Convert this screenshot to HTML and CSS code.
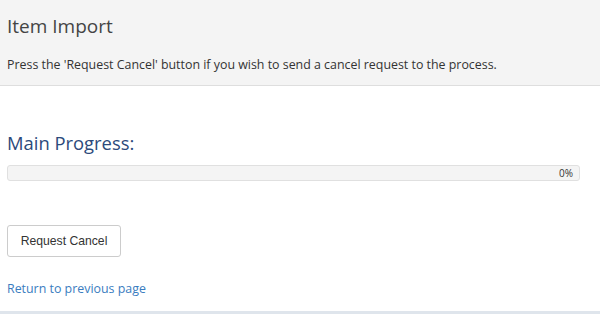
FILE: index.html
```html
<!DOCTYPE html>
<html lang="en">
<head>
  <meta charset="UTF-8" />
  <title>Item Import</title>
  <link rel="stylesheet" href="styles.css">
</head>
<body>
  <div class="page-header">
    <h1>Item Import</h1>
    <p class="page-desc">Press the 'Request Cancel' button if you wish to send a cancel request to the process.</p>
  </div>

  <div class="content">
    <h2 class="progress-title">Main Progress:</h2>
    <div class="progress">
      <div class="progress-bar" style="width: 0%"></div>
      <span class="progress-label">0%</span>
    </div>

    <button class="btn-cancel" type="button">Request Cancel</button>

    <a class="back-link" href="#">Return to previous page</a>
  </div>

  <div class="page-footer"></div>
</body>
</html>
```

FILE: styles.css
```css
* {
  margin: 0;
  padding: 0;
  box-sizing: border-box;
}

body {
  font-family: 'Open Sans', sans-serif;
  background: #fff;
  color: #333;
  width: 600px;
  height: 314px;
  overflow: hidden;
}

.page-header {
  background: #f4f4f4;
  border-bottom: 1px solid #dedede;
  padding: 14px 8px 12px 7px;
}

.page-header h1 {
  font-size: 19px;
  line-height: 24px;
  font-weight: 400;
  color: #444;
}

.page-desc {
  margin-top: 19px;
  font-size: 12.4px;
  line-height: 16px;
  color: #333;
}

.content {
  padding: 0 20px 0 7px;
  display: flex;
  flex-direction: column;
  align-items: flex-start;
}

.progress-title {
  margin-top: 44px;
  font-size: 18.4px;
  line-height: 26px;
  font-weight: 400;
  color: #2c4a7b;
}

.progress {
  position: relative;
  margin-top: 9px;
  width: 100%;
  height: 16px;
  background: #f4f4f4;
  border: 1px solid #e0e0e0;
  border-radius: 3px;
  display: flex;
  align-items: center;
  justify-content: flex-end;
  padding-right: 6px;
}

.progress-bar {
  position: absolute;
  left: 0;
  top: 0;
  bottom: 0;
  background: #4a7fc1;
}

.progress-label {
  position: relative;
  font-size: 10px;
  line-height: 12px;
  color: #333;
}

.btn-cancel {
  margin-top: 44px;
  width: 114px;
  height: 32px;
  font-family: 'Liberation Sans', Arial, sans-serif;
  font-size: 12.2px;
  color: #333;
  background: #fff;
  border: 1px solid #ccc;
  border-radius: 3px;
  cursor: pointer;
}

.back-link {
  margin-top: 24px;
  font-size: 12.4px;
  line-height: 16px;
  color: #3a7cc0;
  text-decoration: none;
}

.page-footer {
  margin-top: 14px;
  border-top: 3px solid #dfe5ec;
}
```
